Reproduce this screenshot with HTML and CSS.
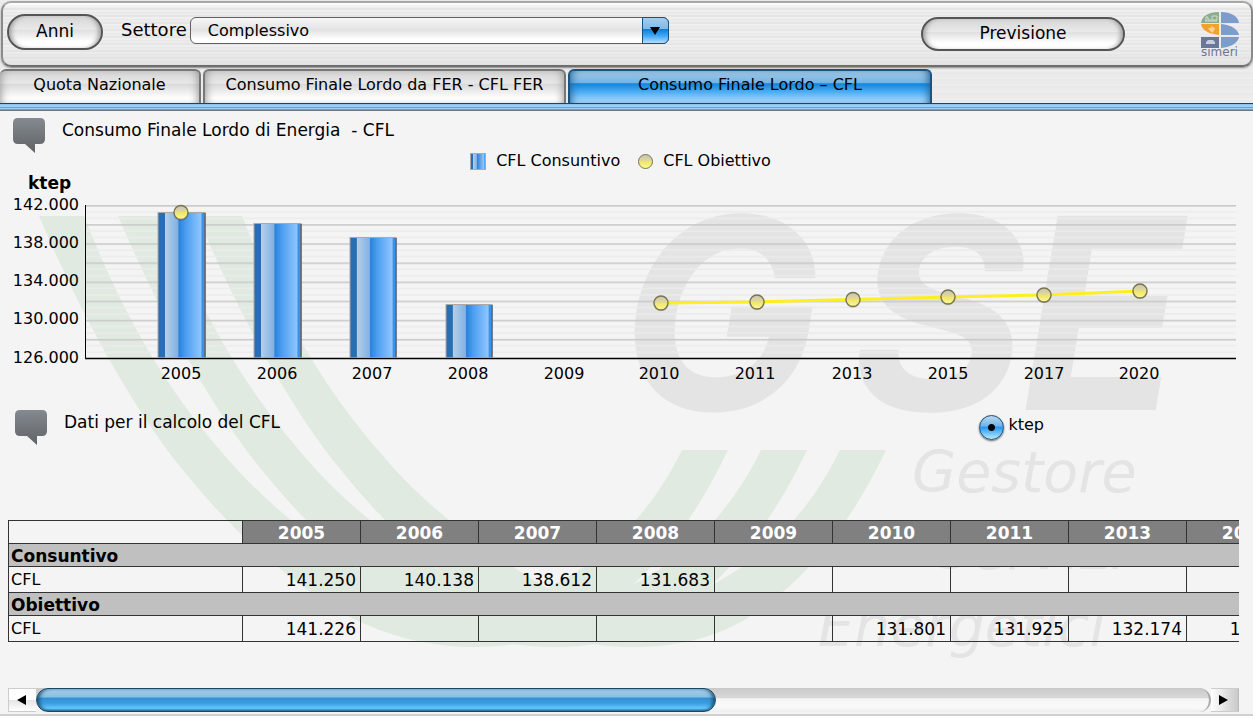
FILE: index.html
```html
<!DOCTYPE html>
<html lang="it">
<head>
<meta charset="utf-8">
<title>Simeri - Consumo Finale Lordo</title>
<meta name="viewport" content="width=device-width, initial-scale=1">
<link rel="stylesheet" href="styles.css">
</head>
<body>
<div class="top">
  <header class="toolbar">
    <button type="button" class="pill pill-years">Anni</button>
    <label class="sector-label" for="sector">Settore</label>
    <div class="combo">
      <select id="sector" class="combo-select"><option>Complessivo</option></select>
      <span class="combo-arrow"><svg width="10" height="8" viewBox="0 0 10 8"><path d="M0 0H10L5 8Z"/></svg></span>
    </div>
    <button type="button" class="pill pill-forecast">Previsione</button>
    <svg class="logo" width="42" height="50" viewBox="0 3 42 50" role="img" aria-label="simeri">
      <path fill="#8bad8d" d="M2 12C3 5 9 1 20 1V12Z"/>
      <path fill="#7c9dcc" d="M22 1C32 1 39 5 40 12H22Z"/>
      <path fill="#f2a12d" d="M2 13H20V24C11 23 3 20 2 13Z"/>
      <path fill="#7c9dcc" d="M22 13C32 14 39 18 40 24H22ZM22 26H40C39 32 32 36 22 37Z"/>
      <path fill="#697897" d="M2 26H20V37H2Z"/>
      <path fill="none" stroke="#d3dfcf" d="M7 10V6H9V9H12M13 9V5H18V9ZM6 10H18"/>
      <path fill="#f9cf92" d="M9 17H12V15L16 17L14 22L11 20Z"/>
      <path fill="#c7cddd" d="M7 31L9 29H14L16 31V33H7Z"/>
      <text class="logo-text" x="2" y="45">simeri</text>
    </svg>
  </header>
  <nav class="tabs">
    <a class="tab tab-national" href="#quota">Quota Nazionale</a>
    <a class="tab tab-fer" href="#fer">Consumo Finale Lordo da FER - CFL FER</a>
    <a class="tab tab-cfl tab-active" href="#cfl" aria-current="page">Consumo Finale Lordo – CFL</a>
  </nav>
  <div class="tab-strip"></div>
</div>

<main class="panel">
  <svg class="watermark" viewBox="0 111 1253 604" aria-hidden="true">
    <defs>
      <path id="swoosh" d="M39 216C75 300 115 378 167 450C222 522 280 577 350 617C390 637 430 647 475 647C520 647 560 637 591 617C650 580 695 520 728 450H682C655 505 610 560 541 591C495 610 440 610 394 591C325 550 265 505 220 450C155 375 115 295 84 216Z"/>
    </defs>
    <g fill="#e1eae1">
      <use href="#swoosh"/><use href="#swoosh" x="79"/><use href="#swoosh" x="158"/>
    </g>
    <g class="mark-big"><text x="620" y="410">G</text><text x="851" y="410">S</text><text x="1020" y="410">E</text></g>
    <g class="mark-small"><text x="912" y="492">Gestore</text><text x="936" y="569">Servizi</text><text x="818" y="646">Energetici</text></g>
  </svg>

  <div class="content">
    <section>
      <div class="heading">
        <svg class="bubble" width="34" height="37" viewBox="0 0 34 37"><path fill="url(#gray)" d="M6 1H28Q33 1 33 6V22Q33 27 28 27H23V36L13 27H6Q1 27 1 22V6Q1 1 6 1Z"/></svg>
        <h2 class="title">Consumo Finale Lordo di Energia&nbsp; - CFL</h2>
      </div>
      <div class="legend">
        <span class="legend-item"><i class="key-bar"></i>CFL Consuntivo</span>
        <span class="legend-item"><i class="key-dot"></i>CFL Obiettivo</span>
      </div>
      <svg class="chart" viewBox="0 172 1253 216" role="img" aria-label="CFL Consuntivo e CFL Obiettivo, ktep">
        <defs>
          <linearGradient id="gray" x2="0" y2="1"><stop stop-color="#858a90"/><stop offset="1" stop-color="#5f6367"/></linearGradient>
          <linearGradient id="bar"><stop stop-color="#286eb2"/><stop offset=".14" stop-color="#286eb2"/><stop offset=".15" stop-color="#b5cfe9"/><stop offset=".43" stop-color="#7fb1e3"/><stop offset=".44" stop-color="#2a82db"/><stop offset=".6" stop-color="#4d9ff2"/><stop offset=".92" stop-color="#90c6fc"/><stop offset=".93" stop-color="#3793f2"/><stop offset="1" stop-color="#3793f2"/></linearGradient>
          <linearGradient id="dot" x2="0" y2="1"><stop stop-color="#c8c5b4"/><stop offset=".4" stop-color="#ddd6a0"/><stop offset=".5" stop-color="#eee468"/><stop offset="1" stop-color="#fff99a"/></linearGradient>
          <pattern id="rules" x="86" y="205" width="20" height="19.125" patternUnits="userSpaceOnUse"><path stroke="#cacaca" stroke-width="1.6" d="M0 .8H20"/><path stroke="#ebebeb" stroke-width="1.4" d="M0 7H20M0 13.4H20"/></pattern>
          <g id="pt"><circle r="7.8" fill="#0002" cy=".5"/><circle r="7" fill="url(#dot)" stroke="#77734e" stroke-width="1.3"/></g>
        </defs>
        <rect x="86" y="205" width="1150" height="154" fill="url(#rules)"/>
        <g class="bars" fill="url(#bar)">
          <rect x="158" y="212.500" width="47" height="146"/>
          <rect x="254" y="223.500" width="47" height="135"/>
          <rect x="350" y="237.500" width="46" height="121"/>
          <rect x="446" y="304.500" width="46" height="54"/>
        </g>
        <path stroke="#5b6068" stroke-width="1.5" d="M205 213V358M301 224V358M396 238V358M492 305V358"/>
        <path fill="none" stroke="#a0a0a0" stroke-width="2.500" d="M85 358.500H1236"/>
        <path fill="none" stroke="#000" d="M85.500 205V358.500H1236"/>
        <path fill="none" stroke="#ffee22" stroke-width="3" d="M661 303L757 302L853 299.500L948 297L1044 295L1140 291"/>
        <use href="#pt" x="181" y="212.500"/><use href="#pt" x="661" y="303"/><use href="#pt" x="757" y="302"/><use href="#pt" x="853" y="299.500"/><use href="#pt" x="948" y="297"/><use href="#pt" x="1044" y="295"/><use href="#pt" x="1140" y="291"/>
        <text class="unit" x="28" y="189">ktep</text>
        <g class="axis axis-y"><text x="79" y="210">142.000</text><text x="79" y="248">138.000</text><text x="79" y="286">134.000</text><text x="79" y="324">130.000</text><text x="79" y="363">126.000</text></g>
        <g class="axis axis-x"><text x="181" y="379">2005</text><text x="277" y="379">2006</text><text x="372" y="379">2007</text><text x="468" y="379">2008</text><text x="564" y="379">2009</text><text x="659" y="379">2010</text><text x="755" y="379">2011</text><text x="852" y="379">2013</text><text x="948" y="379">2015</text><text x="1044" y="379">2017</text><text x="1139" y="379">2020</text></g>
      </svg>
    </section>

    <section>
      <div class="heading heading-data">
        <svg class="bubble" width="34" height="37" viewBox="0 0 34 37"><path fill="url(#gray)" d="M6 1H28Q33 1 33 6V22Q33 27 28 27H23V36L13 27H6Q1 27 1 22V6Q1 1 6 1Z"/></svg>
        <h2 class="title">Dati per il calcolo del CFL</h2>
        <label class="unit-choice"><input class="radio" type="radio" name="unit" checked>ktep</label>
      </div>
      <div class="table-view">
        <table class="data">
          <colgroup><col class="col-name"><col span="9" class="col-year"></colgroup>
          <thead><tr><td></td><th>2005</th><th>2006</th><th>2007</th><th>2008</th><th>2009</th><th>2010</th><th>2011</th><th>2013</th><th>2015</th></tr></thead>
          <tbody>
            <tr class="group"><th colspan="10">Consuntivo</th></tr>
            <tr class="values"><td class="name">CFL</td><td>141.250</td><td>140.138</td><td>138.612</td><td>131.683</td><td></td><td></td><td></td><td></td><td></td></tr>
            <tr class="group"><th colspan="10">Obiettivo</th></tr>
            <tr class="values"><td class="name">CFL</td><td>141.226</td><td></td><td></td><td></td><td></td><td>131.801</td><td>131.925</td><td>132.174</td><td>132.423</td></tr>
          </tbody>
        </table>
      </div>
      <div class="scroller">
        <button type="button" class="scroll-btn" aria-label="Scorri a sinistra"><svg width="9" height="10" viewBox="0 0 9 10"><path d="M9 0V10L0 5Z"/></svg></button>
        <div class="track"><div class="thumb"></div></div>
        <button type="button" class="scroll-btn scroll-right" aria-label="Scorri a destra"><svg width="9" height="10" viewBox="0 0 9 10"><path d="M0 0V10L9 5Z"/></svg></button>
      </div>
    </section>
  </div>
</main>
</body>
</html>
```
FILE: styles.css
```css
* { box-sizing: border-box; }
body {
  margin: 0;
  background: #fff;
  color: #000;
  font: 16px/20px "DejaVu Sans", Verdana, sans-serif;
}
button, select { font: inherit; color: inherit; }

.top {
  padding-top: 1px;
  background: repeating-linear-gradient(#ededed 0 2px, #e9e9e9 2px 4px, #ebebeb 4px 7px);
}
.toolbar {
  display: flex;
  align-items: flex-start;
  height: 66px;
  margin-left: 1px;
  padding: 11px 10px 0 4px;
  border: 2px solid #8a8a8a;
  border-top-color: #a5a8a5;
  border-bottom-color: #6e6e6e;
  border-radius: 10px;
  background: linear-gradient(#fff 0, #fff0 5px), linear-gradient(#fff0 70%, #dcdcdc88), repeating-linear-gradient(#efefef 0 2px, #e8e8e8 2px 3px, #ececec 3px 5px, #e6e6e6 5px 7px);
  box-shadow: 0 1px 2px #888;
}

.pill {
  height: 36px;
  padding: 0 0 2px;
  border: 2px solid #555;
  border-radius: 18px;
  background: linear-gradient(#d6d6d6, #e9e9e9 42%, #dedede 43%, #fff 80%);
  box-shadow: inset 5px 0 5px -3px #999, inset -5px 0 5px -3px #999, 0 0 1px #fff;
  font-size: 17px;
}
.pill-years { width: 96px; }
.pill-forecast { width: 204px; height: 34px; margin: 3px 0 0 auto; }
.sector-label { margin: 6px 3px 0 18px; font-size: 18px; }

.combo { position: relative; width: 479px; height: 27px; margin-top: 3px; }
.combo-select {
  appearance: none;
  width: 100%;
  height: 100%;
  padding: 0 30px 0 17px;
  border: 1px solid #606060;
  border-radius: 6px;
  background: linear-gradient(#f7f7f7, #e2e2e2 48%, #fff 85%);
}
.combo-arrow {
  position: absolute;
  top: 0;
  right: 0;
  display: flex;
  align-items: center;
  justify-content: center;
  width: 27px;
  height: 27px;
  border: 1px solid #165280;
  border-radius: 0 6px 6px 0;
  background: linear-gradient(#a9cbe7, #7fbbe9 42%, #0a80dc 46%, #43a8f5 72%, #b5deff);
  pointer-events: none;
}
.logo { margin: 0 0 0 74px; overflow: visible; }
.logo-text { font-size: 12px; fill: #697897; }

.tabs { display: flex; gap: 2px; padding-top: 2px; }
.tab {
  height: 34px;
  padding-top: 4px;
  border: 2px solid #777;
  border-bottom: 0;
  border-radius: 6px 6px 0 0;
  background: linear-gradient(#d5d5d5, #e8e8e8 38%, #dadada 42%, #fff 85%);
  box-shadow: inset 6px 0 8px -5px #999, inset -6px 0 8px -5px #999;
  color: #000;
  text-align: center;
  text-decoration: none;
  white-space: nowrap;
}
.tab-national { width: 201px; border-left: 0; }
.tab-fer { width: 363px; }
.tab-cfl { width: 364px; }
.tab-active {
  border-color: #175482;
  background: linear-gradient(#a4c8e5, #75b5e5 36%, #1286dd 40%, #4bacf4 65%, #b5dfff);
  box-shadow: inset 6px 0 8px -5px #225f90, inset -6px 0 8px -5px #225f90;
}
.tab-strip {
  height: 8px;
  border-top: 1px solid #0d4877;
  border-bottom: 1px solid #777;
  background: linear-gradient(#8dc0e8, #a1d5ff 45%, #5b97c7 60%, #a3d0f5 75%, #66809a);
}

.panel { position: relative; overflow: hidden; border-bottom: 2px solid #d0d0d0; background: #f4f4f4; }
.watermark { position: absolute; top: 0; left: 0; width: 100%; }
.mark-big { font: italic bold 267px Inter, sans-serif; fill: #e4e4e4; }
.mark-small { font: italic 57px "DejaVu Sans", sans-serif; fill: #e4e4e4; }
.content { position: relative; }

.heading { display: flex; align-items: flex-start; gap: 16px; height: 38px; padding: 6px 12px 0; }
.bubble { flex: none; }
.title { margin: 3px 0 0; font-size: 17px; line-height: 20px; font-weight: normal; }
.legend { display: flex; justify-content: center; gap: 18px; height: 24px; margin-bottom: -1px; padding-right: 12px; }
.legend-item { display: flex; align-items: center; gap: 10px; }
.key-bar {
  width: 16px;
  height: 17px;
  border: 1px solid #aaa;
  background: linear-gradient(90deg, #286eb2 12%, #b5cfe9 15%, #7fb1e3 42%, #2a82db 44%, #90c6fc 90%, #3793f2);
}
.key-dot {
  width: 15px;
  height: 15px;
  border: 1px solid #77734e;
  border-radius: 50%;
  background: linear-gradient(#c8c5b4, #ddd6a0 40%, #eee468 50%, #fff99a);
}

.chart { display: block; width: 100%; }
.bars { stroke: #a9a9a9; }
.axis { font-size: 16px; }
.axis-x { text-anchor: middle; }
.axis-y { text-anchor: end; }
.unit { font-size: 17px; font-weight: bold; }

.heading-data { height: 132px; padding: 21px 209px 0 14px; }
.unit-choice { display: flex; align-items: flex-start; gap: 4px; margin: 6px 0 0 auto; }
.radio {
  appearance: none;
  width: 25px;
  height: 25px;
  margin: 0;
  border: 1px solid #174e78;
  border-radius: 50%;
  background: radial-gradient(circle, #000 3px, #0000 4px), linear-gradient(#bdd7ec, #71b6ea 42%, #269af0 50%, #bdeaff);
  box-shadow: 0 1px 2px #666;
}

.table-view { margin: 0 14px 0 8px; overflow: hidden; }
.data { width: 1296px; table-layout: fixed; border-collapse: collapse; font-size: 17px; line-height: 20px; }
.col-name { width: 234px; }
.col-year { width: 118px; }
.data th, .data td { height: 23px; padding: 2px 4px 0; border: 1px solid #333; }
.data thead th { background: #808080; color: #fff; text-align: center; }
.data .group th { background: #c0c0c0; text-align: left; padding-left: 2px; }
.data .values td { height: 26px; padding-bottom: 2px; text-align: right; }
.data .values .name { padding-left: 2px; text-align: left; font-size: 16px; }

.scroller { display: flex; height: 24px; margin: 46px 14px 2px 8px; }
.scroll-btn {
  width: 28px;
  padding: 0 0 0 8px;
  border: 1px solid #ccc;
  border-right: 0;
  background: linear-gradient(#fff 48%, #e4e4e4 50%, #fff);
  text-align: left;
  line-height: 0;
}
.scroll-right { border-right: 1px solid #bbb; border-left: 0; background: linear-gradient(90deg, #fff, #c9c9c9); }
.track {
  flex: 1;
  border-right: 2px solid #aaa;
  border-radius: 0 12px 12px 0;
  background: linear-gradient(#c9c9c9, #d8d8d8 40%, #f5f5f5 45%, #fafafa 80%, #eee);
}
.thumb {
  width: 58%;
  height: 24px;
  border: 1px solid #194969;
  border-radius: 12px;
  background: linear-gradient(#a8cfe9, #86bfe6 36%, #3390d3 42%, #399fe2 65%, #66c8ff 88%, #347aa6);
  box-shadow: inset 4px 0 4px -2px #174966, inset -4px 0 4px -2px #174966;
}
```
